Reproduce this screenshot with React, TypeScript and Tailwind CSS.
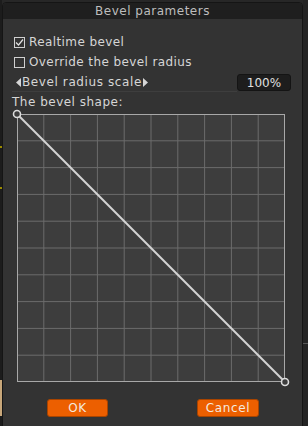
import React from "react";

const font = { fontFamily: '"DejaVu Sans", sans-serif' };

const Checkbox = ({ checked, label }: { checked?: boolean; label: string }) => (
  <div className="flex items-center h-[20px]">
    <div className="w-[11px] h-[11px] border border-[#d0d0d0] flex items-center justify-center">
      {checked && (
        <svg width="9" height="9" viewBox="0 0 9 9">
          <path d="M1 4.5 L3.5 7 L8 1.5" stroke="#e0e0e0" strokeWidth="1.2" fill="none" />
        </svg>
      )}
    </div>
    <span className="ml-[4px] text-[12px] tracking-[0.4px] text-[#d6d6d6]">{label}</span>
  </div>
);

const Graph = () => {
  const size = 268;
  const pad = 5;
  const step = size / 10;
  const lines = Array.from({ length: 11 }, (_, i) => pad + i * step);
  return (
    <svg width={size + pad * 2} height={size + pad * 2} className="block">
      <rect x={pad} y={pad} width={size} height={size} fill="#3d3d3d" />
      {lines.slice(1, 10).map((p, i) => (
        <g key={i}>
          <line x1={p} y1={pad} x2={p} y2={pad + size} stroke="#6c6c6c" strokeWidth="1" />
          <line x1={pad} y1={p} x2={pad + size} y2={p} stroke="#6c6c6c" strokeWidth="1" />
        </g>
      ))}
      <rect x={pad + 0.5} y={pad + 0.5} width={size - 1} height={size - 1} fill="none" stroke="#a8a8a8" strokeWidth="1" />
      <line x1={pad} y1={pad} x2={pad + size} y2={pad + size} stroke="#d4d4d4" strokeWidth="2" />
      <circle cx={pad} cy={pad} r="3.5" fill="#3d3d3d" stroke="#dcdcdc" strokeWidth="1.6" />
      <circle cx={pad + size} cy={pad + size} r="3.5" fill="#3d3d3d" stroke="#dcdcdc" strokeWidth="1.6" />
    </svg>
  );
};

const App = () => {
  return (
    <div className="w-[308px] h-[426px] bg-[#272727] flex overflow-hidden" style={font}>
      <div className="w-[2px] flex flex-col bg-[#1c1c1c]">
        <div className="h-[146px]" />
        <div className="h-[2px] bg-[#9a8a00]" />
        <div className="h-[39px]" />
        <div className="h-[2px] bg-[#9a8a00]" />
        <div className="h-[191px]" />
        <div className="h-[36px] bg-[#c8a77a]" />
      </div>
      <div className="mt-[2px] w-[301px] h-[430px] flex flex-col border border-[#151515] rounded-t-[4px] bg-[#333333] overflow-hidden">
        <div className="h-[16px] bg-[#1f1f1f] flex items-center justify-center text-[12px] tracking-[0.5px] text-[#bdbdbd]">
          Bevel parameters
        </div>
        <div className="flex flex-col pl-[11px] pt-[13px]">
          <Checkbox checked label="Realtime bevel" />
          <Checkbox label="Override the bevel radius" />
          <div className="flex items-center h-[19px] mt-[1px] pr-[11px]">
            <div className="flex-1 h-full flex items-center gap-[1px] border-b border-[#3e3e3e] -ml-[2px]">
              <svg width="5" height="9" viewBox="0 0 5 9" className="ml-[4px]">
                <path d="M5 0 L0 4.5 L5 9 Z" fill="#d6d6d6" />
              </svg>
              <span className="text-[12px] tracking-[0.6px] text-[#d6d6d6]">Bevel radius scale</span>
              <svg width="5" height="9" viewBox="0 0 5 9">
                <path d="M0 0 L5 4.5 L0 9 Z" fill="#d6d6d6" />
              </svg>
            </div>
            <div className="w-[54px] h-[17px] bg-[#1d1d1d] border border-[#141414] rounded-[3px] flex items-center justify-center text-[12px] text-[#e0e0e0]">
              100%
            </div>
          </div>
          <div className="h-[20px] flex items-center -ml-[2px] text-[12px] tracking-[0.5px] text-[#d6d6d6]">
            The bevel shape:
          </div>
          <div className="mt-[-3px] ml-[-2px]">
            <Graph />
          </div>
          <div className="flex mt-[12px] ml-[33px] gap-[89px]">
            <button className="w-[61px] h-[18px] bg-[#ec5f00] border border-[#a84400] rounded-[3px] text-[12px] tracking-[0.6px] text-[#f4e8df] flex items-center justify-center">
              OK
            </button>
            <button className="w-[62px] h-[18px] bg-[#ec5f00] border border-[#a84400] rounded-[3px] text-[12px] tracking-[0.6px] text-[#f4e8df] flex items-center justify-center">
              Cancel
            </button>
          </div>
        </div>
      </div>
      <div className="flex-1 flex flex-col bg-[#242424]">
        <div className="h-[343px]" />
        <div className="h-[1px] bg-[#555]" />
      </div>
    </div>
  );
};

export default App;
